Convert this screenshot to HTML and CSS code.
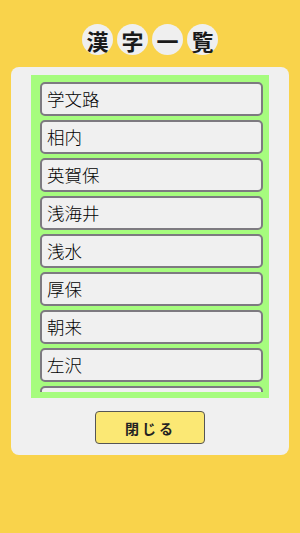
FILE: index.html
```html
<!DOCTYPE html>
<html lang="ja">
<head>
  <meta charset="UTF-8">
  <title>漢字一覧</title>
  <link rel="stylesheet" href="styles.css">
</head>
<body>

  <div class="title">
    <span class="char">漢</span>
    <span class="char">字</span>
    <span class="char">一</span>
    <span class="char">覧</span>
  </div>

  <div class="panel">
    <div class="frame">
      <div class="list">
        <div class="item">学文路</div>
        <div class="item">相内</div>
        <div class="item">英賀保</div>
        <div class="item">浅海井</div>
        <div class="item">浅水</div>
        <div class="item">厚保</div>
        <div class="item">朝来</div>
        <div class="item">左沢</div>
        <div class="item">安足間</div>
      </div>
    </div>
    <button class="close">閉じる</button>
  </div>

</body>
</html>
```

FILE: styles.css
```css
html, body {
  margin: 0;
  height: 100%;
}

body {
  font-family: "Noto Sans CJK JP", "Noto Sans", sans-serif;
  background-color: #f9d34b;
  color: #222;
  padding-top: 24px;
  box-sizing: border-box;
}

.title {
  display: flex;
  justify-content: center;
  gap: 4px;
  margin-bottom: 12px;
}

.char {
  width: 31px;
  height: 31px;
  border-radius: 50%;
  background-color: #efefef;
  display: flex;
  align-items: center;
  justify-content: center;
  font-size: 22px;
  font-weight: bold;
  line-height: 1;
  color: #1a1a1a;
}

.panel {
  margin: 0 11px;
  padding: 8px 20px 11px;
  background-color: #f0f0f0;
  border-radius: 8px;
  display: flex;
  flex-direction: column;
  align-items: center;
}

.frame {
  align-self: stretch;
  background-color: #a6fc7e;
  padding: 7px 6px 6px 9px;
}

.list {
  height: 310px;
  overflow: hidden;
  display: flex;
  flex-direction: column;
  gap: 4px;
}

.item {
  flex: none;
  height: 34px;
  box-sizing: border-box;
  border: 2px solid #7d7a80;
  border-radius: 5px;
  background-color: #f0f0f0;
  padding-left: 5px;
  font-size: 17.5px;
  font-weight: 300;
  line-height: 30px;
  color: #000;
}

.close {
  margin-top: 13px;
  width: 110px;
  height: 33px;
  background-color: #fbe874;
  border: 1px solid #555;
  border-radius: 4px;
  font-family: "Noto Sans CJK JP", sans-serif;
  font-size: 14px;
  font-weight: bold;
  letter-spacing: 3px;
  padding-left: 7px;
  color: #222;
  cursor: pointer;
}
```
